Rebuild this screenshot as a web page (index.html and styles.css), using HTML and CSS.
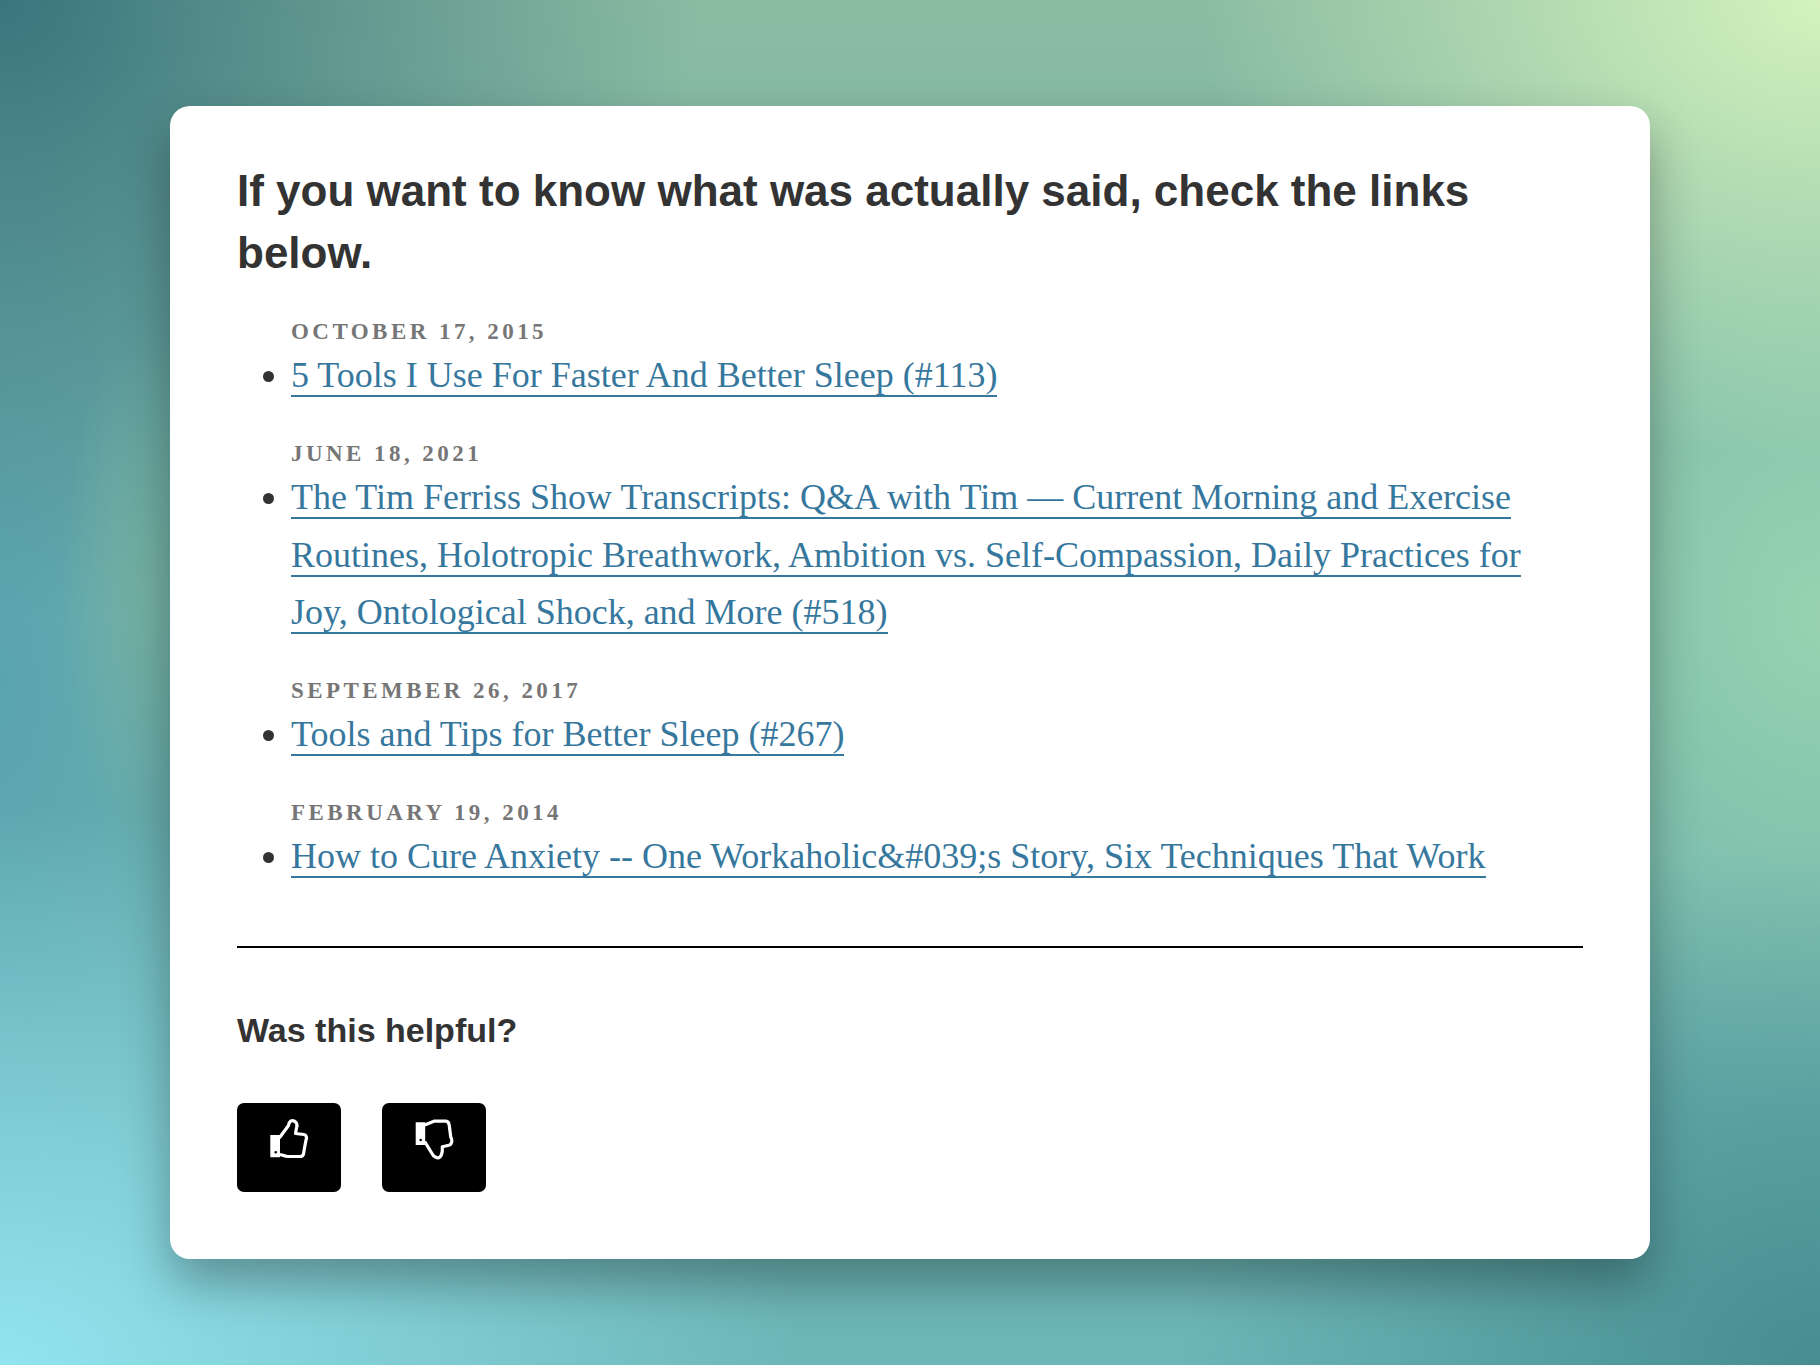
FILE: index.html

```html
<!DOCTYPE html>
<html>
<head>
<meta charset="UTF-8">
<title>Was this helpful?</title>
<link rel="stylesheet" href="styles.css">
</head>
<body>
	<div class="card">
		<h2 class="title">If you want to know what was actually said, check the links below.</h2>
		<div class="source">
			<div class="date">October 17, 2015</div>
			<ul><li><a href="#">5 Tools I Use For Faster And Better Sleep (#113)</a></li></ul>
		</div>
		<div class="source">
			<div class="date">June 18, 2021</div>
			<ul><li><a href="#">The Tim Ferriss Show Transcripts: Q&amp;A with Tim — Current Morning and Exercise Routines, Holotropic Breathwork, Ambition vs. Self-Compassion, Daily Practices for Joy, Ontological Shock, and More (#518)</a></li></ul>
		</div>
		<div class="source">
			<div class="date">September 26, 2017</div>
			<ul><li><a href="#">Tools and Tips for Better Sleep (#267)</a></li></ul>
		</div>
		<div class="source">
			<div class="date">February 19, 2014</div>
			<ul><li><a href="#">How to Cure Anxiety -- One Workaholic&amp;#039;s Story, Six Techniques That Work</a></li></ul>
		</div>
		<hr class="rule">
		<h3 class="helpful">Was this helpful?</h3>
		<div class="votes">
			<button class="vote" aria-label="Yes">
				<svg width="41" height="42" viewBox="0 0 41 42" fill="none" stroke="#fff" stroke-width="3.2" stroke-linejoin="round">
					<path d="M10.3 20 L19.5 7.5 C20 3 23 2 25 3 C28 4.5 28.5 7 27.5 10 L26.5 15.5 L35 16.5 C37.5 17 38 20 37 22 L35.5 30 L34.5 36 C34 38 32.5 38.5 31 38.5 L19 38.5 C15 38.5 13 36.5 10.3 36.5"/>
					<path fill="#fff" fill-rule="evenodd" stroke="none" d="M1.3 17 H11 V39.3 H1.3 Z M5.4 34.3 a1.3 1.3 0 1 0 2.6 0 a1.3 1.3 0 1 0 -2.6 0 Z"/>
				</svg>
			</button>
			<button class="vote" aria-label="No">
				<svg width="41" height="42" viewBox="0 0 41 42" fill="none" stroke="#fff" stroke-width="3.2" stroke-linejoin="round">
					<path d="M10.7 7 L20 3.2 L31.7 3.2 C34 3.5 35 5 35.2 7 L36.7 18.7 C38.5 22 38.3 26 35 27.2 L28.3 28.7 C28.6 32 28.2 35 27.3 37 C26 40 24 40.3 21.8 39.3 C20 38.5 19 37.5 18.3 36 L10.7 23.7"/>
					<path fill="#fff" fill-rule="evenodd" stroke="none" d="M1.7 4.3 H11.2 V27 H1.7 Z M5.4 22 a1.3 1.3 0 1 0 2.6 0 a1.3 1.3 0 1 0 -2.6 0 Z"/>
				</svg>
			</button>
		</div>
	</div>
</body>
</html>
```

FILE: styles.css

```css
html, body {
	margin: 0;
	height: 100%;
}

body {
	height: 1365px;
	box-sizing: border-box;
	padding-top: 106px;
	overflow: hidden;
	background-color: #6fb3ad;
	background-image:
		radial-gradient(ellipse 620px 460px at 100% 0%, #d4f3bd 0%, rgba(212, 243, 189, 0) 100%),
		radial-gradient(ellipse 800px 560px at 0% 100%, #92e4ef 0%, rgba(146, 228, 239, 0) 100%),
		radial-gradient(ellipse 90px 260px at 150px 590px, rgba(120, 178, 160, 0.8) 0%, rgba(120, 178, 160, 0) 100%),
		radial-gradient(ellipse 700px 620px at 0% 0%, #3a757e 0%, rgba(58, 117, 126, 0) 100%),
		radial-gradient(ellipse 640px 520px at 100% 100%, #468c90 0%, rgba(70, 140, 144, 0) 100%),
		radial-gradient(ellipse 300px 760px at 0% 50%, #5aa4b0 0%, rgba(90, 164, 176, 0) 100%),
		radial-gradient(ellipse 420px 520px at 100% 45%, #97d3b0 0%, rgba(151, 211, 176, 0) 100%),
		linear-gradient(180deg, #8bbca2 0%, #6fb3ac 55%, #6db6b8 100%);
}

.card {
	width: 1480px;
	height: 1153px;
	box-sizing: border-box;
	margin: 0 auto;
	padding: 54px 67px 0;
	background: #fff;
	border-radius: 20px;
	box-shadow: 0 24px 50px rgba(0, 0, 0, 0.32);
	font-family: "Liberation Sans", Arial, sans-serif;
	color: #333;
}

.title {
	margin: 0 0 34px;
	font-size: 44px;
	line-height: 61.6px;
	font-weight: bold;
}

.source {
	margin-bottom: 34.4px;
	font-family: "Liberation Serif", "Times New Roman", serif;
}

.source ul {
	margin: 0;
	padding: 0 0 0 54px;
	font-size: 36px;
	line-height: 57.6px;
}

.date {
	padding-left: 54px;
	font-size: 23px;
	line-height: 30px;
	font-weight: bold;
	letter-spacing: 3.45px;
	text-transform: uppercase;
	color: #767676;
}

.source a {
	color: #36779d;
	text-decoration: none;
	border-bottom: 2px solid #36779d;
}

.rule {
	height: 2px;
	margin: 60px 0 0;
	border: 0;
	background: #000;
}

.helpful {
	margin: 62px 0 0;
	font-size: 34px;
	line-height: 40px;
	font-weight: bold;
}

.votes {
	display: flex;
	gap: 41px;
	margin-top: 53px;
}

.vote {
	display: flex;
	justify-content: center;
	width: 104px;
	height: 89px;
	padding: 15px 0 0;
	border: 0;
	border-radius: 7px;
	background: #000;
}
```
